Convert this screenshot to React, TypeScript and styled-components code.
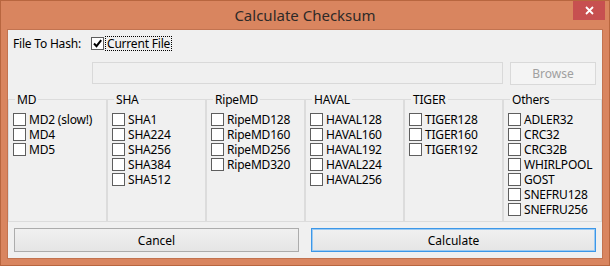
import React from 'react'
import styled, { createGlobalStyle } from 'styled-components'

const GlobalStyle = createGlobalStyle`
  html, body {
    margin: 0;
    padding: 0;
    background: #ffffff;
  }
  body {
    font-family: "Noto Sans", "Open Sans", sans-serif;
    font-size: 12px;
    letter-spacing: -0.2px;
    color: #000;
  }
`;

const Window = styled.div`
  width: 610px;
  height: 266px;
  box-sizing: border-box;
  border: 1px solid #b8663f;
  background: #d9855f;
  display: flex;
  flex-direction: column;
`;

const TitleBar = styled.div`
  height: 28px;
  display: grid;
  grid-template-columns: 1fr auto 1fr;
  align-items: center;
`;

const Title = styled.div`
  grid-column: 2;
  font-size: 15px;
  letter-spacing: 0;
  color: #2e2a28;
  line-height: 20px;
`;

const CloseButton = styled.div`
  grid-column: 3;
  justify-self: end;
  align-self: start;
  width: 32px;
  height: 19px;
  margin-right: 4px;
  background: #c75050;
  display: flex;
  align-items: center;
  justify-content: center;
`;

const Client = styled.div`
  flex: 1;
  margin: 0 6px 6px;
  border: 1px solid #c27350;
  background: #f0f0f0;
  display: flex;
  flex-direction: column;
`;

const SourceGrid = styled.div`
  display: grid;
  grid-template-columns: 77px 1fr 86px;
  grid-template-rows: 15px 23px;
  column-gap: 7px;
  row-gap: 11px;
  margin-top: 6px;
  padding-right: 6px;
`;

const FieldLabel = styled.div`
  padding-left: 5px;
  line-height: 15px;
  white-space: nowrap;
`;

const CurrentFile = styled.label`
  grid-column: 2 / 4;
  display: flex;
  align-items: center;
  gap: 2px;
  margin-left: -1px;
  line-height: 15px;
`;

const FocusText = styled.span`
  outline: 1px dotted #000;
  padding: 0 1px;
  line-height: 13px;
`;

const PathInput = styled.div`
  grid-column: 2;
  box-sizing: border-box;
  border: 1px solid #d9d9d9;
  background: #f0f0f0;
  height: 22px;
`;

const BrowseButton = styled.button`
  grid-column: 3;
  box-sizing: border-box;
  height: 23px;
  border: 1px solid #d9d9d9;
  background: #f4f4f4;
  color: #a0a0a0;
  font: inherit;
  padding: 0;
`;

const Groups = styled.div`
  display: flex;
  margin-top: 7px;
`;

const Group = styled.fieldset`
  width: 99px;
  height: 130px;
  box-sizing: border-box;
  margin: 0;
  padding: 5px 0 0 4px;
  min-width: 0;
  border: 1px solid #dcdcdc;
  display: flex;
  flex-direction: column;
`;

const Legend = styled.legend`
  margin-left: 2px;
  padding: 0 2px;
  line-height: 15px;
`;

const Option = styled.label`
  display: flex;
  align-items: center;
  gap: 3px;
  height: 15px;
  line-height: 15px;
  white-space: nowrap;
`;

const Box = styled.span`
  width: 13px;
  height: 13px;
  box-sizing: border-box;
  border: 1px solid #5e5e5e;
  background: #fff;
  flex: none;
  display: flex;
  align-items: center;
  justify-content: center;
`;

const Actions = styled.div`
  display: grid;
  grid-template-columns: 1fr 1fr;
  column-gap: 12px;
  padding: 0 6px;
  margin-top: 6px;
`;

const ActionButton = styled.button<{ $default?: boolean }>`
  height: 24px;
  box-sizing: border-box;
  border: 1px solid ${(p) => (p.$default ? '#3c97e8' : '#acacac')};
  box-shadow: ${(p) => (p.$default ? 'inset 0 0 0 1px #9ccaf2' : 'none')};
  background: linear-gradient(#f0f0f0, #e5e5e5);
  font: inherit;
  color: #000;
  padding: 0;
`;

const Check = ({ checked }: { checked?: boolean }) => (
  <Box>
    {checked && (
      <svg width="11" height="11" viewBox="0 0 11 11">
        <path d="M2 5.5 L4.5 8.2 L9.2 2.2" fill="none" stroke="#000" strokeWidth="2" />
      </svg>
    )}
  </Box>
);

const groups: { name: string; items: string[] }[] = [
  { name: 'MD', items: ['MD2 (slow!)', 'MD4', 'MD5'] },
  { name: 'SHA', items: ['SHA1', 'SHA224', 'SHA256', 'SHA384', 'SHA512'] },
  { name: 'RipeMD', items: ['RipeMD128', 'RipeMD160', 'RipeMD256', 'RipeMD320'] },
  { name: 'HAVAL', items: ['HAVAL128', 'HAVAL160', 'HAVAL192', 'HAVAL224', 'HAVAL256'] },
  { name: 'TIGER', items: ['TIGER128', 'TIGER160', 'TIGER192'] },
  {
    name: 'Others',
    items: ['ADLER32', 'CRC32', 'CRC32B', 'WHIRLPOOL', 'GOST', 'SNEFRU128', 'SNEFRU256'],
  },
];

export default function App() {
  return (
    <>
      <GlobalStyle />
      <Window>
        <TitleBar>
          <Title>Calculate Checksum</Title>
          <CloseButton>
            <svg width="9" height="9" viewBox="0 0 9 9">
              <path d="M1 1 L8 8 M8 1 L1 8" stroke="#fff" strokeWidth="1.8" />
            </svg>
          </CloseButton>
        </TitleBar>
        <Client>
          <SourceGrid>
            <FieldLabel>File To Hash:</FieldLabel>
            <CurrentFile>
              <Check checked />
              <FocusText>Current File</FocusText>
            </CurrentFile>
            <PathInput />
            <BrowseButton disabled>Browse</BrowseButton>
          </SourceGrid>
          <Groups>
            {groups.map((g) => (
              <Group key={g.name}>
                <Legend>{g.name}</Legend>
                {g.items.map((item) => (
                  <Option key={item}>
                    <Check />
                    {item}
                  </Option>
                ))}
              </Group>
            ))}
          </Groups>
          <Actions>
            <ActionButton>Cancel</ActionButton>
            <ActionButton $default>Calculate</ActionButton>
          </Actions>
        </Client>
      </Window>
    </>
  );
}
